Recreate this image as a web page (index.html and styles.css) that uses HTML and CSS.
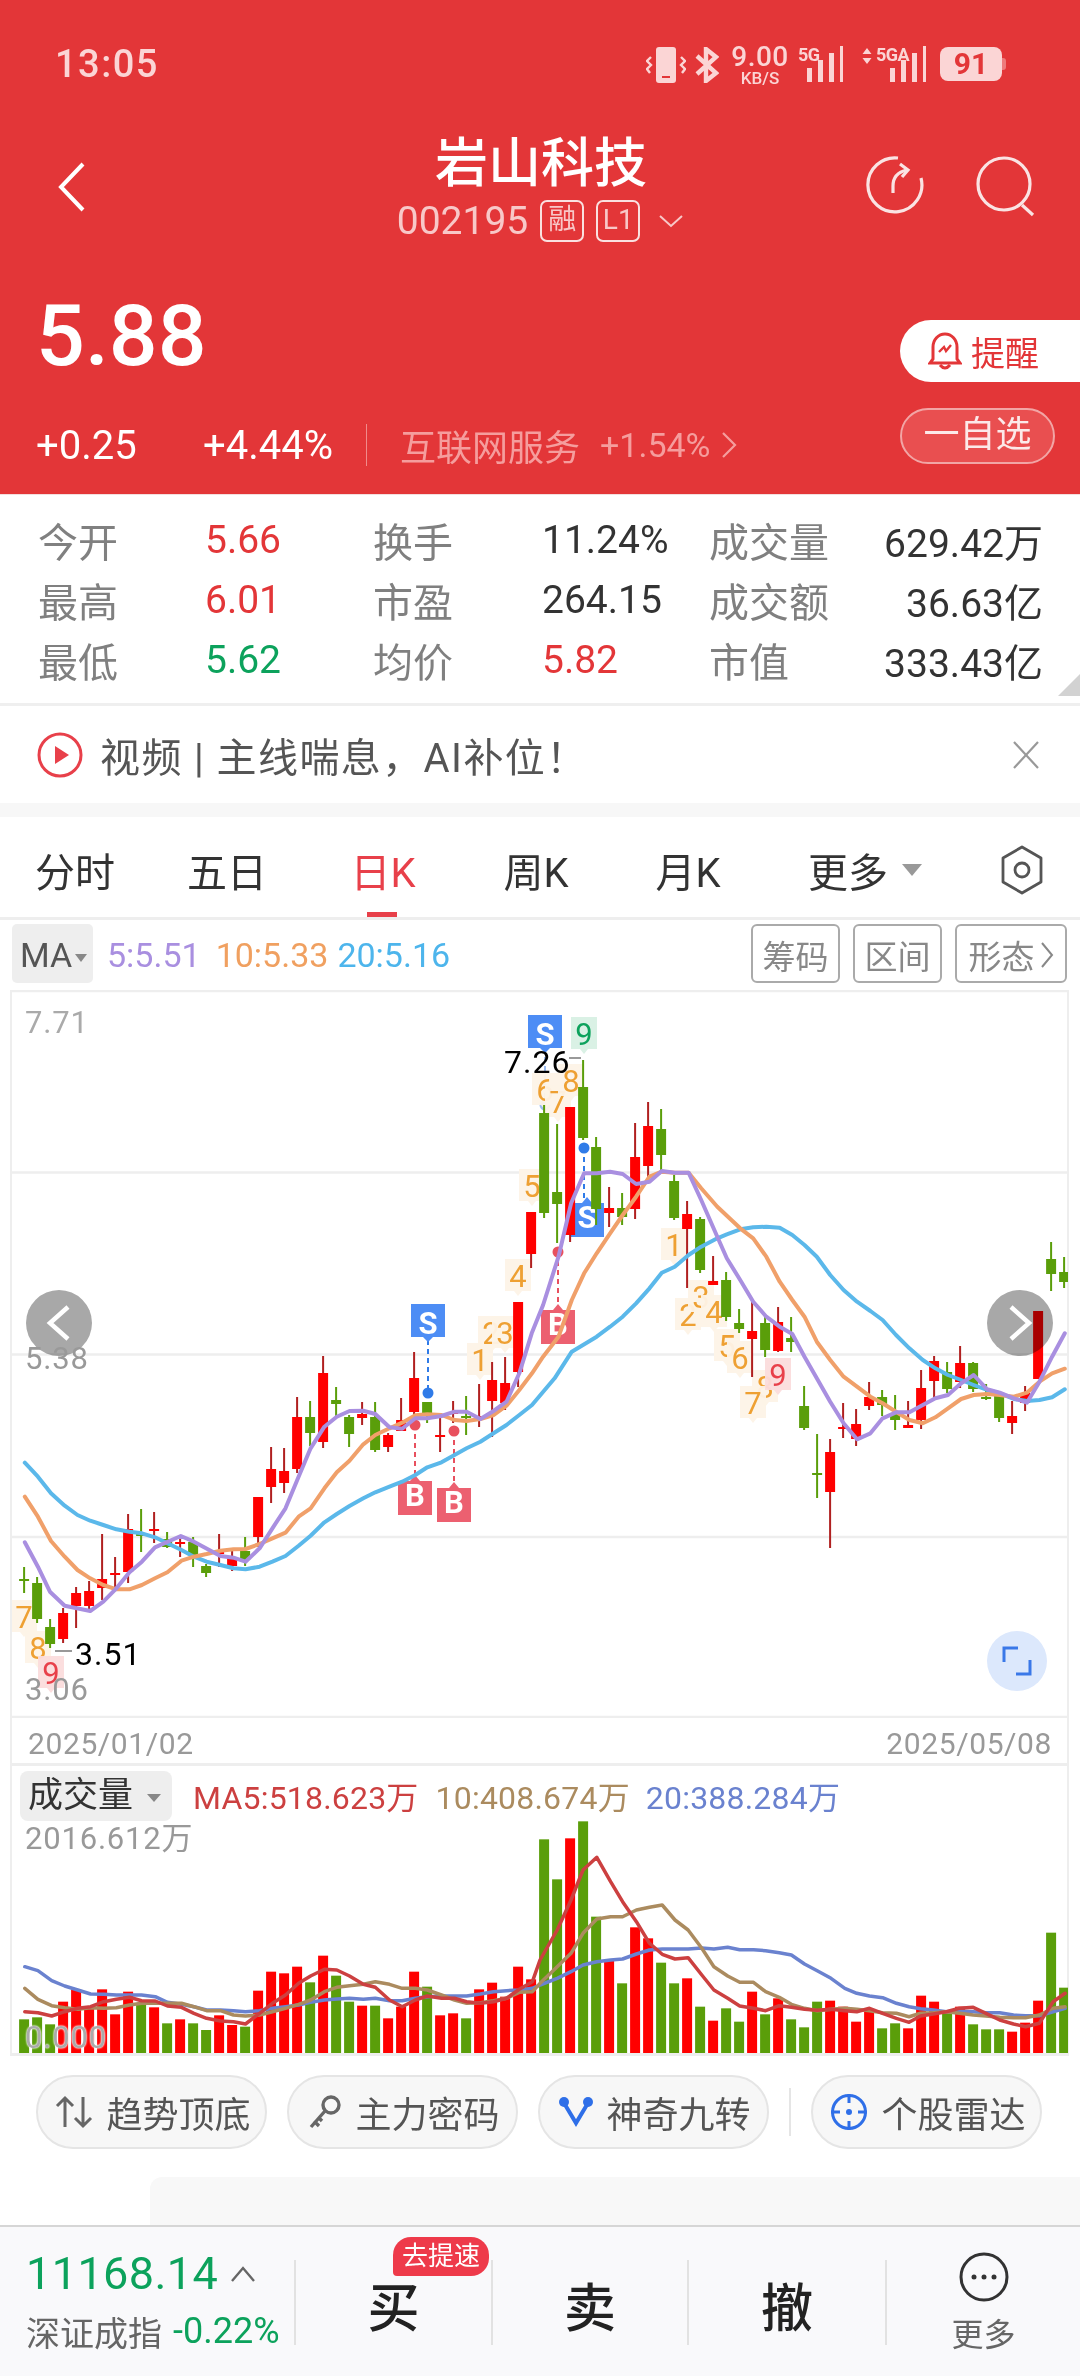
FILE: index.html
```html
<!DOCTYPE html>
<html lang="zh-CN">
<head>
<meta charset="UTF-8">
<meta name="viewport" content="width=device-width, initial-scale=1.0">
<title>岩山科技 002195</title>
<link rel="stylesheet" href="styles.css">
</head>
<body>

<header class="header">
    <div class="status">
        <div class="time">13:05</div>
        <div class="status-icons">
            <svg class="ic-phone" width="40" height="38" viewBox="0 0 40 38">
                <rect x="10" y="1" width="20" height="36" rx="3" fill="#fbd5d5"/>
                <rect x="16" y="30" width="8" height="2" fill="#e33638"/>
                <path d="M5 11 L1 15 L5 19 L1 23 L4 27 M35 11 L39 15 L35 19 L39 23 L36 27" fill="none" stroke="#fbd5d5" stroke-width="2.4"/>
            </svg>
            <svg class="ic-bt" width="24" height="36" viewBox="0 0 24 36">
                <path d="M2 9 L21 26 L11 34 V2 L21 10 L2 27" fill="none" stroke="#fbd5d5" stroke-width="4.4"/>
            </svg>
            <div class="speed"><b>9.00</b><span>KB/S</span></div>
            <div class="net net-5g">
                <span class="net-name">5G</span>
                <svg width="40" height="38" viewBox="0 0 40 38"><path d="M4 22h5v14h-5zM15 14h5v22h-5zM26 7h5v29h-5zM37 0h3v36h-3z" fill="#fbd5d5"/></svg>
            </div>
            <div class="net net-5ga">
                <svg class="net-arrows" width="10" height="16" viewBox="0 0 10 16"><path d="M5 0 L9.500 6 H0.500Z M5 16 L9.500 10 H0.500Z" fill="#fbd5d5"/></svg>
                <span class="net-name">5GA</span>
                <svg width="40" height="38" viewBox="0 0 40 38"><path d="M4 22h5v14h-5zM15 14h5v22h-5zM26 7h5v29h-5zM37 0h3v36h-3z" fill="#fbd5d5"/></svg>
            </div>
            <div class="battery"><span>91</span></div>
        </div>
    </div>

    <div class="nav">
        <svg class="back" width="30" height="50" viewBox="0 0 30 50"><path d="M26 2 L4 25 L26 48" fill="none" stroke="#fff" stroke-width="4"/></svg>
        <div class="nav-title">
            <div class="name">岩山科技</div>
            <div class="code-row">
                <span class="code">002195</span>
                <span class="tag-box">融</span>
                <span class="tag-box">L1</span>
                <svg class="code-arrow" width="24" height="13" viewBox="0 0 24 13"><path d="M1 1 L12 11 L23 1" fill="none" stroke="#f8c8c8" stroke-width="2"/></svg>
            </div>
        </div>
        <div class="nav-icons">
            <svg width="60" height="60" viewBox="0 0 60 60" fill="none" stroke="#fae3e3" stroke-width="3.200">
                <path d="M33 3 A27 27 0 1 0 56 23"/>
                <path d="M28 38 V31 Q28 18 42 15"/>
                <path d="M35 9 L43 15 L37 22"/>
            </svg>
            <svg width="62" height="62" viewBox="0 0 62 62" fill="none" stroke="#fae3e3" stroke-width="3.200">
                <circle cx="29" cy="29" r="26"/>
                <path d="M47 50 L58 60"/>
            </svg>
        </div>
    </div>

    <div class="quote">
        <div class="quote-left">
            <div class="price">5.88</div>
            <div class="change-row">
                <span class="change">+0.25</span>
                <span class="change pct">+4.44%</span>
                <span class="bar"></span>
                <span class="sector">互联网服务</span>
                <span class="sector sector-pct">+1.54%</span>
                <svg width="16" height="26" viewBox="0 0 16 26"><path d="M2 1 L14 13 L2 25" fill="none" stroke="#f59d9d" stroke-width="2.200"/></svg>
            </div>
        </div>
        <div class="quote-right">
            <div class="remind">
                <svg width="34" height="40" viewBox="0 0 34 40" fill="none" stroke="#e33638" stroke-width="3">
                    <path d="M5 28 V16 A12 13 0 0 1 29 16 V28 L32 32 H2Z"/>
                    <path d="M12 34 Q17 40 22 34"/>
                    <path d="M11 21 L16 16 L18 20 L23 14" stroke-width="2.400"/>
                </svg>
                提醒
            </div>
            <div class="add-fav">一自选</div>
        </div>
    </div>
</header>

<section class="stats">
    <span class="st-label">今开</span><span class="st-val red">5.66</span>
    <span class="st-label">换手</span><span class="st-val">11.24%</span>
    <span class="st-label">成交量</span><span class="st-val right">629.42万</span>
    <span class="st-label">最高</span><span class="st-val red">6.01</span>
    <span class="st-label">市盈</span><span class="st-val">264.15</span>
    <span class="st-label">成交额</span><span class="st-val right">36.63亿</span>
    <span class="st-label">最低</span><span class="st-val green">5.62</span>
    <span class="st-label">均价</span><span class="st-val red">5.82</span>
    <span class="st-label">市值</span><span class="st-val right">333.43亿</span>
    <i class="corner"></i>
</section>

<section class="news">
    <svg width="46" height="46" viewBox="0 0 46 46"><circle cx="23" cy="23" r="21" fill="none" stroke="#e8404a" stroke-width="3"/><path d="M18 14 L32 23 L18 32Z" fill="#e8404a"/></svg>
    <span class="news-text">视频 | 主线喘息，AI补位！</span>
    <svg class="news-close" width="28" height="28" viewBox="0 0 28 28"><path d="M2 1 L26 27 M26 1 L2 27" fill="none" stroke="#999" stroke-width="2.200"/></svg>
</section>

<nav class="tabs">
    <span class="tab">分时</span>
    <span class="tab">五日</span>
    <span class="tab active">日K</span>
    <span class="tab">周K</span>
    <span class="tab">月K</span>
    <span class="tab">更多<i class="tri"></i></span>
    <span class="tab">
        <svg width="44" height="50" viewBox="0 0 44 50" fill="none" stroke="#555" stroke-width="2.800"><path d="M22 2 L41 13 V37 L22 48 L3 37 V13Z" stroke-linejoin="round"/><circle cx="22" cy="25" r="7"/></svg>
    </span>
</nav>

<div class="ma-bar">
    <span class="ma-chip">MA<i class="tri-sm"></i></span>
    <span class="ma-legend c5">5:5.51</span>
    <span class="ma-legend c10">10:5.33</span>
    <span class="ma-legend c20">20:5.16</span>
    <span class="ma-btns">
        <span class="ma-btn">筹码</span>
        <span class="ma-btn">区间</span>
        <span class="ma-btn wide">形态<svg width="14" height="26" viewBox="0 0 14 26"><path d="M2 1 L12 13 L2 25" fill="none" stroke="#888" stroke-width="2"/></svg></span>
    </span>
</div>

<section class="charts">
    <svg id="kline" class="chart-svg" width="1056" height="728" viewBox="12 990 1056 728"></svg>
    <span class="axis axis-top">7.71</span>
    <span class="round-btn round-left"><svg width="30" height="36" viewBox="0 0 30 36"><path d="M24 2 L6 18 L24 34" fill="none" stroke="#fff" stroke-width="4.500"/></svg></span>
    <span class="round-btn round-right"><svg width="30" height="36" viewBox="0 0 30 36"><path d="M6 2 L24 18 L6 34" fill="none" stroke="#fff" stroke-width="4.500"/></svg></span>
    <span class="axis axis-mid">5.38</span>
    <span class="axis axis-low">3.06</span>
    <span class="extreme ext-high">7.26</span>
    <span class="extreme ext-low">3.51</span>
    <span class="expand"><svg width="30" height="30" viewBox="0 0 30 30" fill="none" stroke="#3a78e8" stroke-width="3"><path d="M16 2 H2 V16 M14 28 H28 V14"/></svg></span>

    <div class="dates"><span>2025/01/02</span><span>2025/05/08</span></div>

    <div class="vol-head">
        <span class="vol-chip">成交量<i class="tri-sm big"></i></span>
        <span class="vol-ma v5">MA5:518.623万</span>
        <span class="vol-ma v10">10:408.674万</span>
        <span class="vol-ma v20">20:388.284万</span>
    </div>
    <svg id="volume" class="chart-svg" width="1056" height="232" viewBox="12 1821 1056 232"></svg>
    <span class="axis vol-max">2016.612万</span>
    <span class="axis vol-zero">0.000</span>
</section>

<section class="tools">
    <span class="pill">
        <svg width="38" height="34" viewBox="0 0 38 34" fill="none" stroke="#666" stroke-width="3"><path d="M10 32 V3 M2 11 L10 3 L18 11 M28 2 V31 M20 23 L28 31 L36 23"/></svg>
        趋势顶底
    </span>
    <span class="pill">
        <svg width="34" height="36" viewBox="0 0 34 36" fill="none" stroke="#666" stroke-width="3.400"><circle cx="23" cy="11" r="8"/><path d="M17 17 L3 33 M6 27 L11 32 M10 23 L14 27"/></svg>
        主力密码
    </span>
    <span class="pill">
        <svg width="34" height="32" viewBox="0 0 34 32"><path d="M5 7 L17 27 L29 7" fill="none" stroke="#2f6fe8" stroke-width="4"/><circle cx="5" cy="6" r="5" fill="#2f6fe8"/><circle cx="29" cy="6" r="5" fill="#2f6fe8"/></svg>
        神奇九转
    </span>
    <i class="tools-bar"></i>
    <span class="pill">
        <svg width="38" height="38" viewBox="0 0 38 38" fill="none" stroke="#2f6fe8" stroke-width="3"><circle cx="19" cy="19" r="16.500"/><path d="M19 1 V10 M19 28 V37 M1 19 H10 M28 19 H37"/><circle cx="19" cy="19" r="3" fill="#2f6fe8" stroke="none"/></svg>
        个股雷达
    </span>
</section>

<div class="promo"><div class="promo-card"></div></div>

<footer class="footer">
    <div class="foot-cell index">
        <div class="idx-top"><span class="idx-num">11168.14</span><svg width="26" height="16" viewBox="0 0 26 16"><path d="M2 15 L13 2 L24 15" fill="none" stroke="#666" stroke-width="2.400"/></svg></div>
        <div class="idx-bot"><span class="idx-name">深证成指</span><span class="idx-pct">-0.22%</span></div>
    </div>
    <div class="foot-cell trade">买<span class="speedup">去提速</span></div>
    <div class="foot-cell trade">卖</div>
    <div class="foot-cell trade">撤</div>
    <div class="foot-cell more">
        <svg width="50" height="50" viewBox="0 0 50 50"><circle cx="25" cy="25" r="23" fill="none" stroke="#333" stroke-width="3"/><circle cx="15" cy="25" r="2.500" fill="#333"/><circle cx="25" cy="25" r="2.500" fill="#333"/><circle cx="35" cy="25" r="2.500" fill="#333"/></svg>
        <span>更多</span>
    </div>
</footer>

<script src="chart.js"></script>
</body>
</html>
```

FILE: styles.css
```css
* { box-sizing: border-box; }
body {
    margin: 0;
    width: 1080px;
    height: 2376px;
    overflow: hidden;
    background: #fff;
    color: #333;
    font-family: Roboto, "Noto Sans CJK SC", sans-serif;
}

/* red header */
.header {
    height: 495px;
    background: #e33638;
    color: #fff;
    border-bottom: 1px solid #f3dede;
}
.status {
    height: 100px;
    display: flex;
    justify-content: space-between;
    align-items: flex-start;
    padding: 43px 78px 0 55px;
    color: #fbd5d5;
}
.time { font-size: 38px; line-height: 42px; font-weight: 500; letter-spacing: 1.500px; }
.status-icons { display: flex; align-items: flex-start; margin-top: 3px; }
.ic-phone { margin-right: 9px; }
.ic-bt { margin-right: 9px; margin-top: 1px; }
.speed { width: 64px; margin-right: 6px; text-align: center; line-height: 1; }
.speed b { display: block; font-size: 28px; line-height: 22px; font-weight: 500; letter-spacing: .5px; }
.speed span { display: block; font-size: 17px; line-height: 15px; font-weight: 500; margin-top: 3px; }
.net { position: relative; display: flex; align-items: flex-start; }
.net-name { font-size: 18px; line-height: 18px; font-weight: 700; letter-spacing: -.5px; }
.net-5g { width: 50px; margin-right: 14px; }
.net-5g svg { position: absolute; left: 5px; top: 0; }
.net-5ga { width: 66px; margin-right: 12px; }
.net-5ga svg:last-child { position: absolute; left: 24px; top: 0; }
.net-5ga .net-name { margin-left: 4px; }
.net-arrows { margin-top: 2px; }
.battery {
    position: relative;
    width: 62px;
    height: 34px;
    margin-top: 1px;
    border-radius: 8px;
    background: #fbd5d5;
    color: #e33638;
    font-size: 30px;
    line-height: 34px;
    font-weight: 700;
    text-align: center;
}
.battery::after {
    content: "";
    position: absolute;
    right: -4px;
    top: 11px;
    width: 4px;
    height: 12px;
    background: #ee7b7c;
    border-radius: 0 3px 3px 0;
}

.nav {
    height: 160px;
    display: grid;
    grid-template-columns: 1fr auto 1fr;
    align-items: start;
    padding: 34px 43px 0 43px;
}
.back { margin: 28px 0 0 14px; }
.nav-title { text-align: center; }
.name { font-size: 53px; line-height: 60px; font-weight: 500; padding-left: 2px; }
.code-row { display: flex; align-items: center; height: 46px; margin-top: 4px; color: #f8c8c8; }
.code { font-size: 39px; line-height: 46px; margin-right: 12px; }
.tag-box {
    width: 44px;
    height: 42px;
    margin-right: 12px;
    border: 2px solid #fae0e0;
    border-radius: 7px;
    font-size: 28px;
    line-height: 36px;
    text-align: center;
}
.code-arrow { margin-left: 7px; }
.nav-icons { display: flex; justify-content: flex-end; gap: 50px; margin-top: 21px; }

.quote { height: 234px; display: flex; justify-content: space-between; }
.quote-left { padding-left: 36px; }
.price { margin-top: 26px; font-size: 86px; line-height: 100px; font-weight: 500; }
.change-row { display: flex; align-items: center; height: 50px; margin-top: 34px; font-size: 40px; }
.change { width: 167px; color: #fff; }
.change.pct { width: 163px; }
.bar { width: 1px; height: 42px; background: #f08b8b; margin-right: 33px; }
.sector { color: #f59d9d; font-size: 36px; }
.sector-pct { margin: 0 10px 0 20px; font-size: 34px; }
.quote-right { width: 180px; padding-top: 60px; }
.remind {
    display: flex;
    align-items: center;
    height: 62px;
    padding-left: 28px;
    gap: 9px;
    background: #fff;
    border-radius: 31px 0 0 31px;
    color: #e33638;
    font-size: 34px;
}
.add-fav {
    width: 155px;
    height: 56px;
    margin-top: 26px;
    border: 2px solid #f2a5a5;
    border-radius: 28px;
    background: #e94f50;
    color: #fce9e9;
    font-size: 36px;
    line-height: 50px;
    text-align: center;
}

/* stats */
.stats {
    position: relative;
    height: 211px;
    padding: 15px 0 0 38px;
    display: grid;
    grid-template-columns: 167px 168px 169px 167px 120px 214px;
    grid-auto-rows: 60px;
    align-items: center;
    border-bottom: 3px solid #efefef;
    font-size: 39px;
}
.st-label { color: #808080; font-size: 40px; }
.st-val { color: #333; }
.red { color: #e33638; }
.green { color: #0ca25c; }
.right { text-align: right; }
.corner {
    position: absolute;
    right: 0;
    bottom: 7px;
    border-style: solid;
    border-width: 0 0 22px 22px;
    border-color: transparent transparent #d2d2d2 transparent;
}

.news {
    height: 97px;
    display: flex;
    align-items: center;
    padding: 0 40px 0 37px;
}
.news-text { margin-left: 17px; font-size: 40px; letter-spacing: 1.400px; color: #555; }
.news-close { margin-left: auto; }

/* period tabs */
.tabs {
    height: 117px;
    display: grid;
    grid-template-columns: 150px 154px 158px 148px 156px 198px 116px;
    align-items: end;
    border-top: 14px solid #f7f7f7;
    border-bottom: 3px solid #eee;
    font-size: 40px;
    color: #333;
}
.tab { position: relative; display: flex; justify-content: center; align-items: center; height: 95px; }
.tab.active { color: #e8404a; }
.tab.active::after {
    content: "";
    position: absolute;
    left: 63px;
    bottom: 0;
    width: 30px;
    height: 5px;
    background: #e8404a;
}
.tri {
    width: 0;
    height: 0;
    margin-left: 14px;
    border-style: solid;
    border-width: 12px 10px 0;
    border-color: #999 transparent transparent;
}
.tri-sm {
    display: inline-block;
    width: 0;
    height: 0;
    margin-left: 3px;
    border-style: solid;
    border-width: 8px 6px 0;
    border-color: #888 transparent transparent;
    vertical-align: middle;
}
.tri-sm.big { margin-left: 14px; border-width: 8px 7px 0; }

.ma-bar {
    height: 70px;
    display: flex;
    align-items: flex-start;
    padding: 4px 13px 0 12px;
    font-size: 34px;
}
.ma-chip {
    width: 81px;
    height: 59px;
    padding-left: 8px;
    background: #eee;
    border-radius: 5px;
    color: #555;
    line-height: 63px;
    white-space: nowrap;
}
.ma-legend { line-height: 63px; margin-left: 14px; }
.c5 { color: #a98fe0; }
.c10 { color: #f0a060; margin-left: 15px; }
.c20 { color: #4db5ec; margin-left: 9px; }
.ma-btns { display: flex; gap: 13px; margin-left: auto; }
.ma-btn {
    display: flex;
    align-items: center;
    justify-content: center;
    gap: 5px;
    width: 89px;
    height: 59px;
    padding-top: 2px;
    border: 2px solid #aaa;
    border-radius: 6px;
    color: #888;
    font-size: 33px;
}
.ma-btn.wide { width: 112px; }

/* chart panels */
.charts {
    position: relative;
    width: 1059px;
    height: 1066px;
    margin-left: 10px;
    border-left: 2px solid #eee;
    border-right: 2px solid #eee;
    border-bottom: 3px solid #eee;
}
.chart-svg { display: block; }
.axis { position: absolute; left: 13px; font-size: 31px; line-height: 36px; color: #999; letter-spacing: .8px; }
.axis-top { top: 15px; color: #aaa; }
.axis-mid { top: 351px; }
.axis-low { top: 682px; }
.extreme { position: absolute; font-size: 32px; line-height: 36px; color: #000; letter-spacing: 1px; }
.ext-high { left: 492px; top: 54px; }
.ext-low { left: 63px; top: 646px; }
.round-btn {
    position: absolute;
    top: 300px;
    width: 66px;
    height: 66px;
    display: flex;
    align-items: center;
    justify-content: center;
    border-radius: 50%;
    background: #a8a8a8;
    mix-blend-mode: multiply;
}
.round-left { left: 14px; }
.round-right { left: 975px; }
.expand {
    position: absolute;
    left: 975px;
    top: 641px;
    width: 60px;
    height: 60px;
    display: flex;
    align-items: center;
    justify-content: center;
    border-radius: 50%;
    background: #dce8fc;
}
.dates {
    height: 48px;
    display: flex;
    justify-content: space-between;
    align-items: center;
    padding: 5px 15px 0 16px;
    border-bottom: 3px solid #eee;
    font-size: 30px;
    color: #999;
    letter-spacing: .6px;
}
.vol-head { height: 55px; display: flex; align-items: flex-start; padding: 5px 0 0 8px; font-size: 32px; line-height: 54px; }
.vol-chip { width: 152px; height: 50px; padding-left: 8px; background: #eee; border-radius: 8px; color: #333; font-size: 35px; line-height: 50px; white-space: nowrap; }
.vol-ma { letter-spacing: .2px; white-space: nowrap; }
.v5 { margin-left: 21px; color: #cc4040; }
.v10 { margin-left: 17px; color: #ab8b5f; }
.v20 { margin-left: 16px; color: #6a82cf; }
.vol-max { top: 831px; font-size: 31px; }
.vol-zero { top: 1030px; color: #aaa; text-shadow: 0 0 2px #fff, 0 0 2px #fff; }

/* tool pills */
.tools { display: flex; align-items: center; height: 93px; padding: 19px 0 0 36px; }
.pill {
    display: flex;
    align-items: center;
    justify-content: center;
    gap: 13px;
    width: 231px;
    height: 74px;
    margin-right: 20px;
    padding-left: 3px;
    border: 2px solid #e5e5e5;
    border-radius: 37px;
    background: #f7f7f7;
    color: #555;
    font-size: 36px;
    white-space: nowrap;
}
.tools-bar { width: 2px; height: 48px; margin-right: 20px; background: #e5e5e5; }

.promo { height: 76px; padding: 28px 0 0 150px; }
.promo-card { height: 48px; background: #f8f8f8; border-radius: 12px 0 0 0; }

/* bottom bar */
.footer {
    height: 151px;
    display: grid;
    grid-template-columns: 294px 197px 196px 198px 195px;
    align-items: start;
    padding-top: 33px;
    background: #f9f9fb;
    border-top: 2px solid #d6d6d6;
}
.foot-cell { position: relative; height: 85px; display: flex; align-items: center; justify-content: center; }
.foot-cell + .foot-cell { border-left: 2px solid #e2e2e2; }
.index { display: block; padding-left: 26px; }
.idx-top { display: flex; align-items: center; gap: 12px; height: 40px; margin-top: -6px; }
.idx-num { font-size: 45px; line-height: 40px; color: #0ca25c; letter-spacing: .4px; }
.idx-bot { display: flex; align-items: center; gap: 11px; height: 40px; margin-top: 17px; white-space: nowrap; }
.idx-name { font-size: 34px; color: #666; }
.idx-pct { font-size: 36px; color: #0ca25c; }
.trade { font-size: 52px; font-weight: 500; color: #222; padding-top: 3px; }
.speedup {
    position: absolute;
    right: 2px;
    top: -23px;
    width: 96px;
    height: 39px;
    background: #ee3a4a;
    border-radius: 18px 18px 18px 4px;
    color: #fff;
    font-size: 26px;
    font-weight: 400;
    line-height: 39px;
    text-align: center;
}
.more { flex-direction: column; }
.more svg { flex-shrink: 0; }
.more span { flex-shrink: 0; font-size: 32px; line-height: 38px; margin-top: 14px; color: #666; }
```

FILE: chart.js
```js
var NS = 'http://www.w3.org/2000/svg';
var RED = '#ff0000', RED_WICK = '#b02020', GREEN = '#5a9e0a';

function slotX(i) { return 24.1 + 13 * i; }

function add(svg, tag, attrs, text) {
    var el = document.createElementNS(NS, tag);
    for (var k in attrs) el.setAttribute(k, attrs[k]);
    if (text) el.textContent = text;
    svg.appendChild(el);
    return el;
}

// values traced off the crops, so [x, y, x, y ...] in crop pixels: sx and top bring them back to the page
function crop(pts, sx, left, top) {
    var out = [];
    for (var i = 0; i < pts.length; i += 2) {
        out.push((left + pts[i] / sx).toFixed(1) + ',' + (top + pts[i + 1] / 3).toFixed(1));
    }
    return out;
}

function line(svg, parts, color, width) {
    add(svg, 'polyline', {
        points: parts.join(' '), fill: 'none', stroke: color, 'stroke-width': width,
        'stroke-linejoin': 'round', 'stroke-linecap': 'round'
    });
}

// candles: colour, body top, body bottom, wick top, wick bottom
var K = [
    'g',1579,1581,1567,1593, 'g',1583,1619,1577,1623, 'g',1627,1644,1619,1648, 'r',1613,1639,1608,1643,
    'r',1593,1606,1587,1628, 'r',1591,1606,1581,1609, 'r',1579,1588,1534,1600, 'r',1573,1575,1557,1588,
    'r',1529,1572,1514,1583, 'g',1533,1536,1509,1552, 'r',1529,1531,1512,1543, 'g',1539,1547,1532,1548,
    'r',1542,1544,1535,1557, 'g',1542,1555,1537,1567, 'g',1566,1573,1564,1577, 'r',1552,1554,1534,1567,
    'r',1557,1566,1549,1571, 'g',1551,1560,1537,1566, 'r',1497,1537,1497,1547, 'r',1469,1487,1447,1503,
    'r',1471,1483,1448,1493, 'r',1417,1469,1397,1473, 'g',1417,1433,1401,1446, 'r',1373,1442,1356,1448,
    'g',1400,1404,1387,1417, 'g',1417,1434,1415,1447, 'r',1414,1418,1402,1425, 'g',1417,1450,1402,1452,
    'r',1435,1447,1433,1452, 'r',1420,1431,1398,1431, 'r',1378,1412,1352,1420, 'g',1402,1413,1402,1423,
    'r',1435,1437,1418,1452, 'r',1412,1414,1401,1423, 'g',1416,1418,1396,1435, 'r',1416,1418,1384,1427,
    'r',1380,1401,1362,1437, 'r',1383,1403,1357,1410, 'r',1302,1372,1302,1387, 'r',1212,1254,1212,1268,
    'g',1113,1213,1105,1218, 'g',1192,1204,1124,1243, 'r',1107,1235,1107,1242, 'g',1087,1138,1060,1140,
    'g',1147,1209,1137,1225, 'r',1208,1213,1187,1227, 'g',1208,1217,1193,1225, 'r',1157,1209,1123,1219,
    'r',1126,1166,1102,1177, 'g',1129,1155,1109,1170, 'g',1181,1218,1175,1220, 'r',1214,1229,1201,1288,
    'g',1219,1270,1217,1273, 'r',1281,1285,1256,1285, 'g',1280,1317,1272,1321, 'g',1323,1329,1309,1333,
    'r',1331,1339,1302,1377, 'g',1323,1350,1317,1357, 'r',1322,1351,1307,1352, 'g',1338,1342,1317,1352,
    'g',1406,1428,1386,1430, 'g',1473,1475,1434,1498, 'r',1452,1492,1439,1548, 'r',1427,1429,1403,1438,
    'r',1424,1439,1409,1446, 'r',1397,1406,1382,1410, 'g',1397,1405,1390,1416, 'g',1413,1420,1395,1430,
    'r',1425,1428,1401,1428, 'r',1388,1420,1370,1429, 'r',1361,1381,1356,1398, 'g',1372,1389,1362,1393,
    'r',1363,1382,1346,1388, 'g',1363,1389,1362,1392, 'g',1397,1399,1384,1400, 'g',1396,1418,1396,1422,
    'r',1416,1423,1401,1434, 'r',1393,1403,1386,1411, 'r',1311,1379,1311,1379, 'g',1259,1274,1242,1291,
    'g',1272,1282,1257,1288
];

// volume bar tops, in crop pixels (y = 1740 + v / 3)
var V = [838,832,853,785,748,805,748,823,755,790,802,850,838,850,870,826,855,860,752,695,
    700,680,727,647,707,785,797,797,835,800,695,740,826,820,835,748,728,770,680,718,
    298,418,295,244,530,660,730,562,595,668,730,715,800,842,805,845,755,823,775,838,
    862,785,782,800,845,815,865,850,865,767,785,820,800,853,868,868,875,848,782,578,743];

function tagNum(svg, x, y, num, kind) {
    var bg = { o: '#fdf3e7', r: '#fbdcdc', g: '#d8f0e4' }[kind];
    var fg = { o: '#eea033', r: '#e8404a', g: '#0ca25c' }[kind];
    add(svg, 'path', { d: 'M' + (x - 13) + ' ' + (y - 17) + 'h26v32h-9l-4 5l-4 -5h-9z', fill: bg, opacity: .95 });
    add(svg, 'text', { x: x, y: y + 11, 'text-anchor': 'middle', 'font-size': 31, fill: fg, 'font-family': 'Roboto' }, String(num));
}

function flag(svg, x, top, letter, color, up) {
    var d = up
        ? 'M' + (x - 17) + ' ' + (top + 5) + 'h12l5 -6l5 6h12v34h-34z'
        : 'M' + (x - 17) + ' ' + top + 'h34v33h-12l-5 5l-5 -5h-12z';
    add(svg, 'path', { d: d, fill: color });
    add(svg, 'text', { x: x, y: top + 30, 'text-anchor': 'middle', 'font-size': 31, 'font-weight': 700, fill: '#fff', 'font-family': 'Roboto' }, letter);
}

function signal(svg, x, y1, y2, dotY, color) {
    add(svg, 'line', { x1: x, y1: y1, x2: x, y2: y2, stroke: color, 'stroke-width': 2, 'stroke-dasharray': '5 4' });
    add(svg, 'circle', { cx: x, cy: dotY, r: 5.5, fill: color });
}

function drawKline() {
    var svg = document.getElementById('kline');
    [1172.5, 1354.5, 1537, 1717].forEach(function(y) {
        add(svg, 'line', { x1: 12, x2: 1068, y1: y, y2: y, stroke: '#eee', 'stroke-width': 2.5 });
    });
    add(svg, 'line', { x1: 12, x2: 1068, y1: 991, y2: 991, stroke: '#eee', 'stroke-width': 2.5 });

    // buy / sell signals and the turn counters sit under the candles
    var BLUE = '#4d8df5', PINK = '#ec6070', DOT_RED = '#e8505e', DOT_BLUE = '#2f7be8';
    signal(svg, 428, 1340, 1393, 1393, DOT_BLUE);
    flag(svg, 428, 1304, 'S', BLUE, false);
    signal(svg, 415, 1425, 1477, 1425, DOT_RED);
    flag(svg, 415, 1476, 'B', PINK, true);
    signal(svg, 454, 1431, 1484, 1431, DOT_RED);
    flag(svg, 454, 1483, 'B', PINK, true);
    signal(svg, 558, 1252, 1306, 1252, DOT_RED);
    flag(svg, 558, 1305, 'B', PINK, true);
    signal(svg, 584, 1148, 1198, 1148, DOT_BLUE);
    flag(svg, 587, 1198, 'S', BLUE, true);
    signal(svg, 545, 1048, 1105, 1105, '#9cbcf0');
    flag(svg, 545, 1015, 'S', BLUE, false);

    [[480,1360,1],[491,1333,2],[505,1333,3],[518,1276,4],[532,1186,5],[545,1090,6],[558,1102,7],[571,1081,8]].forEach(function(t) {
        tagNum(svg, t[0], t[1], t[2], 'o');
    });
    tagNum(svg, 584, 1034, 9, 'g');
    [[24,1617,7],[38,1648,8]].forEach(function(t) { tagNum(svg, t[0], t[1], t[2], 'o'); });
    tagNum(svg, 51, 1673, 9, 'r');
    // the 8 lies behind the 7 here
    [[674,1245,1],[688,1315,2],[701,1297,3],[714,1312,4],[727,1346,5],[740,1358,6],[765,1387,8],[753,1403,7]].forEach(function(t) {
        tagNum(svg, t[0], t[1], t[2], 'o');
    });
    tagNum(svg, 778, 1375, 9, 'r');

    for (var i = 0; i * 5 < K.length; i++) {
        var c = K[i * 5], x = slotX(i), top = K[i * 5 + 1], bot = K[i * 5 + 2];
        add(svg, 'rect', { x: x - 1, y: K[i * 5 + 3], width: 2, height: K[i * 5 + 4] - K[i * 5 + 3], fill: c === 'r' ? RED_WICK : GREEN });
        add(svg, 'rect', { x: x - 5, y: top, width: 10, height: bot - top, fill: c === 'r' ? RED : GREEN });
    }

    add(svg, 'line', { x1: 55, x2: 72, y1: 1651, y2: 1651, stroke: '#777', 'stroke-width': 1.5 });
    add(svg, 'line', { x1: 569, x2: 581, y1: 1058, y2: 1058, stroke: '#777', 'stroke-width': 1.5 });

    var blue = crop([72,368,110,410,148,460,188,497,225,525,262,542,300,555,338,568,376,575,412,580,450,592,486,610,527,630,563,650,600,665,640,675,678,685,713,688,754,680,791,665,829,648,867,617,902,587,942,547,978,522,1015,498,1055,475,1090,457,1131,440,1168,425,1206,405,1241,382,1282,367,1320,345,1355,325,1395,305,1433,280,1471,255,1508,225,1545,195], 2.904, 0, 1340)
        .concat(crop([195,1195,240,1115,305,1070,340,1040,373,1010,408,970,443,925,475,878,509,860,545,825,578,800,620,775,645,763,680,748,714,742,748,740,783,743,816,765,848,795,880,830,915,885,950,930,985,965,1020,993,1052,1020,1087,1065,1122,1105,1157,1140,1190,1165,1223,1185], 2.613, 480, 980))
        .concat(crop([1257,0,1290,15,1325,30,1358,40,1395,57,1429,63,1462,60,1495,52,1528,28], 2.613, 480, 1380));
    var orange = crop([72,470,110,530,148,603,188,650,225,690,262,715,300,735,338,748,376,748,412,735,450,715,486,697,527,662,563,650,600,642,640,632,678,628,713,627,754,612,791,595,829,578,867,530,902,505,942,445,978,397,1015,362,1055,313,1090,285,1131,265,1168,248,1206,226,1241,223,1282,225,1320,240,1355,243,1395,237,1433,225,1471,197,1508,150,1545,100], 2.904, 0, 1340)
        .concat(crop([165,1130,205,1070,240,960,272,880,305,820,340,760,373,705,408,650,443,590,475,575,509,578,545,578,578,625,620,680,680,745,714,775,748,830,783,905,816,960,848,1010,880,1085,915,1140,950,1190], 2.613, 480, 980))
        .concat(crop([985,20,1020,50,1052,70,1087,95,1122,120,1157,130,1190,112,1223,85,1257,57,1290,45,1325,42,1358,45,1395,50,1429,38,1462,5,1495,-20,1528,-34], 2.613, 480, 1380));
    var purple = crop([72,607,110,680,145,755,188,797,262,813,300,785,338,745,376,697,412,665,450,622,525,588,563,605,640,648,678,653,713,665,754,625,791,565,829,505,867,410,902,325,942,260,978,230,1015,213,1055,212,1090,222,1131,262,1168,266,1206,235,1241,235,1282,228,1320,215,1355,215,1395,237,1433,213,1471,185,1508,100], 2.904, 0, 1340)
        .concat(crop([135,1060,165,975,205,830,238,670,272,580,305,580,340,575,373,582,408,612,443,605,475,573,509,578,545,578,578,660,620,770,645,835,680,900,714,965,748,1010,783,1040,816,1062,848,1130,880,1195], 2.613, 480, 980))
        .concat(crop([915,65,950,130,985,178,1020,160,1052,115,1087,97,1122,97,1157,75,1190,55,1223,45,1257,10,1290,-15,1325,28,1358,38,1395,55,1429,68,1462,5,1495,-70,1528,-140], 2.613, 480, 1380));
    line(svg, blue, '#5bb8ea', 4);
    line(svg, orange, '#f0a06a', 4);
    line(svg, purple, '#a98fe0', 4);
}

function drawVolume() {
    var svg = document.getElementById('volume');
    V.forEach(function(v, i) {
        var top = 1740 + v / 3;
        add(svg, 'rect', { x: slotX(i) - 5, y: top, width: 10, height: 2053 - top, fill: K[i * 5] === 'r' ? RED : GREEN });
    });
    var ma20 = crop([72,680,110,692,150,722,188,738,226,750,263,762,301,763,338,765,376,765,411,765,451,770,486,787,527,793,563,800,600,810,640,810,678,812,713,815,754,812,791,805,829,800,867,795,902,787,942,780,978,777,1015,775,1055,778,1090,775,1131,782,1168,782,1206,775,1241,770,1282,768,1320,768,1355,768,1395,762,1433,755,1471,752,1508,750,1546,745], 2.904, 0, 1740)
        .concat(crop([0,735,50,715,90,695,125,675,165,665,205,660,240,657,280,642,318,630,355,627,392,627,430,627,470,624,505,627,545,622,580,629,620,629,655,632,695,638,730,645,768,672,805,692,845,715,885,745,920,760,957,768,995,773,1035,790,1072,800,1105,806,1142,810,1180,815,1218,813,1258,815,1295,818,1335,818,1375,825,1410,827,1450,827,1490,815,1525,805], 2.904, 540, 1740));
    var ma10 = crop([72,745,110,778,150,797,188,803,226,808,263,803,301,805,338,803,376,795,411,790,451,790,486,790,527,790,563,800,600,812,640,812,678,825,713,828,754,825,791,815,829,805,867,793,902,780,942,755,978,742,1015,737,1055,733,1090,725,1131,733,1168,745,1206,745,1241,750,1282,765,1320,780,1355,790,1395,788,1433,782,1471,775,1508,757,1546,755], 2.904, 0, 1740)
        .concat(crop([0,730,50,680,90,640,125,580,165,537,205,530,240,530,280,510,318,502,355,495,392,540,430,570,470,625,505,680,545,708,580,727,620,727,655,755,695,772,730,793,768,805,805,812,845,808,885,805,920,808,957,812,995,818,1035,820,1072,830,1105,820,1142,818,1180,815,1218,820,1258,825,1295,828,1335,832,1375,833,1410,833,1450,825,1490,805,1525,800], 2.904, 540, 1740));
    var ma5 = crop([72,815,110,818,150,828,188,815,226,805,263,800,301,785,338,778,376,772,411,782,451,783,486,798,527,802,563,820,600,835,640,843,678,845,713,852,754,820,791,790,829,765,867,730,902,708,942,688,978,690,1015,708,1055,733,1090,742,1131,780,1168,800,1206,780,1241,768,1282,775,1320,775,1355,785,1395,790,1433,785,1471,775,1508,748,1546,725], 2.904, 0, 1740)
        .concat(crop([0,660,50,570,90,480,125,390,165,352,205,425,240,485,280,545,318,610,355,643,392,657,430,653,470,705,505,750,545,775,580,798,620,805,655,812,695,797,730,802,768,808,805,811,845,808,885,812,920,815,957,805,995,820,1035,835,1072,847,1105,828,1142,822,1180,815,1218,805,1258,802,1295,820,1335,840,1375,852,1410,860,1450,850,1490,785,1525,760], 2.904, 540, 1740));
    line(svg, ma20, '#6a82cf', 3.5);
    line(svg, ma10, '#ab8b5f', 3.5);
    line(svg, ma5, '#cc4040', 3.5);
}

drawKline();
drawVolume();
```
